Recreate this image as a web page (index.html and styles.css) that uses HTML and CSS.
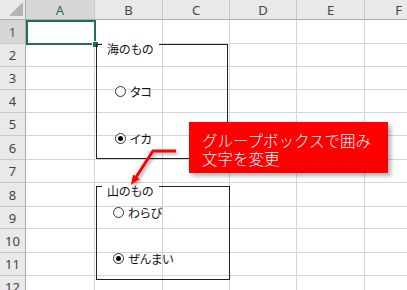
FILE: index.html
```html
<!DOCTYPE html>
<html>
<head>
    <title>グループボックス</title>
    <link rel="stylesheet" href="styles.css">
</head>
<body>
    <div class="sheet">
        <div class="corner"></div><div class="col-head sel">A</div><div class="col-head">B</div><div class="col-head">C</div><div class="col-head">D</div><div class="col-head">E</div><div class="col-head">F</div>
        <div class="row-head sel">1</div><div class="cell"></div><div class="cell"></div><div class="cell"></div><div class="cell"></div><div class="cell"></div><div class="cell"></div>
        <div class="row-head">2</div><div class="cell"></div><div class="cell"></div><div class="cell"></div><div class="cell"></div><div class="cell"></div><div class="cell"></div>
        <div class="row-head">3</div><div class="cell"></div><div class="cell"></div><div class="cell"></div><div class="cell"></div><div class="cell"></div><div class="cell"></div>
        <div class="row-head">4</div><div class="cell"></div><div class="cell"></div><div class="cell"></div><div class="cell"></div><div class="cell"></div><div class="cell"></div>
        <div class="row-head">5</div><div class="cell"></div><div class="cell"></div><div class="cell"></div><div class="cell"></div><div class="cell"></div><div class="cell"></div>
        <div class="row-head">6</div><div class="cell"></div><div class="cell"></div><div class="cell"></div><div class="cell"></div><div class="cell"></div><div class="cell"></div>
        <div class="row-head">7</div><div class="cell"></div><div class="cell"></div><div class="cell"></div><div class="cell"></div><div class="cell"></div><div class="cell"></div>
        <div class="row-head">8</div><div class="cell"></div><div class="cell"></div><div class="cell"></div><div class="cell"></div><div class="cell"></div><div class="cell"></div>
        <div class="row-head">9</div><div class="cell"></div><div class="cell"></div><div class="cell"></div><div class="cell"></div><div class="cell"></div><div class="cell"></div>
        <div class="row-head">10</div><div class="cell"></div><div class="cell"></div><div class="cell"></div><div class="cell"></div><div class="cell"></div><div class="cell"></div>
        <div class="row-head">11</div><div class="cell"></div><div class="cell"></div><div class="cell"></div><div class="cell"></div><div class="cell"></div><div class="cell"></div>
        <div class="row-head">12</div><div class="cell"></div><div class="cell"></div><div class="cell"></div><div class="cell"></div><div class="cell"></div><div class="cell"></div>

        <!-- active cell A1 -->
        <div class="selection"><span class="fill-handle"></span></div>

        <!-- group boxes -->
        <div class="group group-sea">
            <span class="group-label">海のもの</span>
            <div class="radio"><span class="dot"></span>タコ</div>
            <div class="radio"><span class="dot on"></span>イカ</div>
        </div>
        <div class="group group-mountain">
            <span class="group-label">山のもの</span>
            <div class="radio"><span class="dot"></span>わらび</div>
            <div class="radio"><span class="dot on"></span>ぜんまい</div>
        </div>

        <!-- callout -->
        <div class="callout">グループボックスで囲み<br>文字を変更</div>
        <svg class="arrow" width="65" height="55" viewBox="0 0 65 55">
            <defs>
                <marker id="head" viewBox="0 0 10 8" refX="2" refY="4" markerWidth="10" markerHeight="8" markerUnits="userSpaceOnUse" orient="auto">
                    <path d="M0,0 L10,4 L0,8 z" fill="#ff0000"/>
                </marker>
            </defs>
            <polyline points="56,11 33,11 15.3,38.3" fill="none" stroke="#ff0000" stroke-width="3" marker-end="url(#head)"/>
        </svg>
    </div>
</body>
</html>
```

FILE: styles.css
```css
body {
    margin: 0;
    width: 407px;
    height: 290px;
    overflow: hidden;
    background: #fff;
    font-family: "Noto Sans", "Noto Sans CJK JP", sans-serif;
}
.sheet {
    position: relative;
    display: grid;
    grid-template-columns: 26px 69px 68px 67px 67px 68px 68px;
    grid-template-rows: 20px 24px 23px 23px 23px 23px 24px 23px 24px 22px 24px 23px 23px;
}
.cell {
    border-right: 1px solid #d4d4d4;
    border-bottom: 1px solid #d4d4d4;
}
.corner {
    display: flex;
    justify-content: flex-end;
    align-items: flex-end;
    padding: 0 2px 3px 0;
    background: #e9e9e9;
    border-right: 1px solid #ababab;
    border-bottom: 1px solid #ababab;
}
.corner::after {
    content: "";
    width: 0;
    height: 0;
    border-left: 14px solid transparent;
    border-bottom: 14px solid #b4b4b4;
}
.col-head,
.row-head {
    display: flex;
    align-items: center;
    justify-content: center;
    background: #e9e9e9;
    color: #444;
    font-size: 13px;
}
.col-head {
    border-right: 1px solid #c8c8c8;
    border-bottom: 1px solid #ababab;
}
.row-head {
    border-right: 1px solid #ababab;
    border-bottom: 1px solid #c8c8c8;
}
.col-head.sel,
.row-head.sel {
    background: #d6d6d6;
    color: #217346;
}
.selection {
    position: absolute;
    left: 26px;
    top: 20px;
    width: 70px;
    height: 25px;
    border: 2px solid #217346;
    box-sizing: border-box;
}
.fill-handle {
    position: absolute;
    right: -5px;
    bottom: -5px;
    width: 5px;
    height: 5px;
    background: #217346;
    border: 1px solid #fff;
}
.group {
    position: absolute;
    left: 96px;
    box-sizing: border-box;
    border: 1px solid #222;
    display: flex;
    flex-direction: column;
    font-family: "Noto Sans CJK JP", sans-serif;
    font-size: 12px;
    font-feature-settings: "palt";
    color: #111;
}
.group-sea {
    top: 44px;
    width: 132px;
    height: 115px;
    padding: 39px 0 0 18px;
    gap: 33px;
}
.group-mountain {
    top: 186px;
    width: 134px;
    height: 94px;
    padding: 18px 0 0 16px;
    gap: 32px;
}
.group-label {
    position: absolute;
    left: 5px;
    top: -3px;
    padding: 0 5px;
    line-height: 14px;
    background: #fff;
}
.radio {
    display: flex;
    align-items: center;
    gap: 4px;
    height: 14px;
}
.dot {
    position: relative;
    width: 11px;
    height: 11px;
    box-sizing: border-box;
    border: 1px solid #333;
    border-radius: 50%;
    background: #fff;
}
.dot.on::after {
    content: "";
    position: absolute;
    left: 2px;
    top: 2px;
    width: 5px;
    height: 5px;
    border-radius: 50%;
    background: #000;
}
.callout {
    position: absolute;
    left: 189px;
    top: 122px;
    width: 199px;
    height: 51px;
    box-sizing: border-box;
    padding: 9px 0 0 13px;
    background: #ff0000;
    color: #fff;
    font-family: "Noto Sans CJK JP", sans-serif;
    font-weight: 300;
    font-size: 15.5px;
    line-height: 18px;
    box-shadow: 3px 3px 4px rgba(0, 0, 0, 0.3);
}
.arrow {
    position: absolute;
    left: 120px;
    top: 140px;
    filter: drop-shadow(2px 2px 1.5px rgba(0, 0, 0, 0.3));
}
```
